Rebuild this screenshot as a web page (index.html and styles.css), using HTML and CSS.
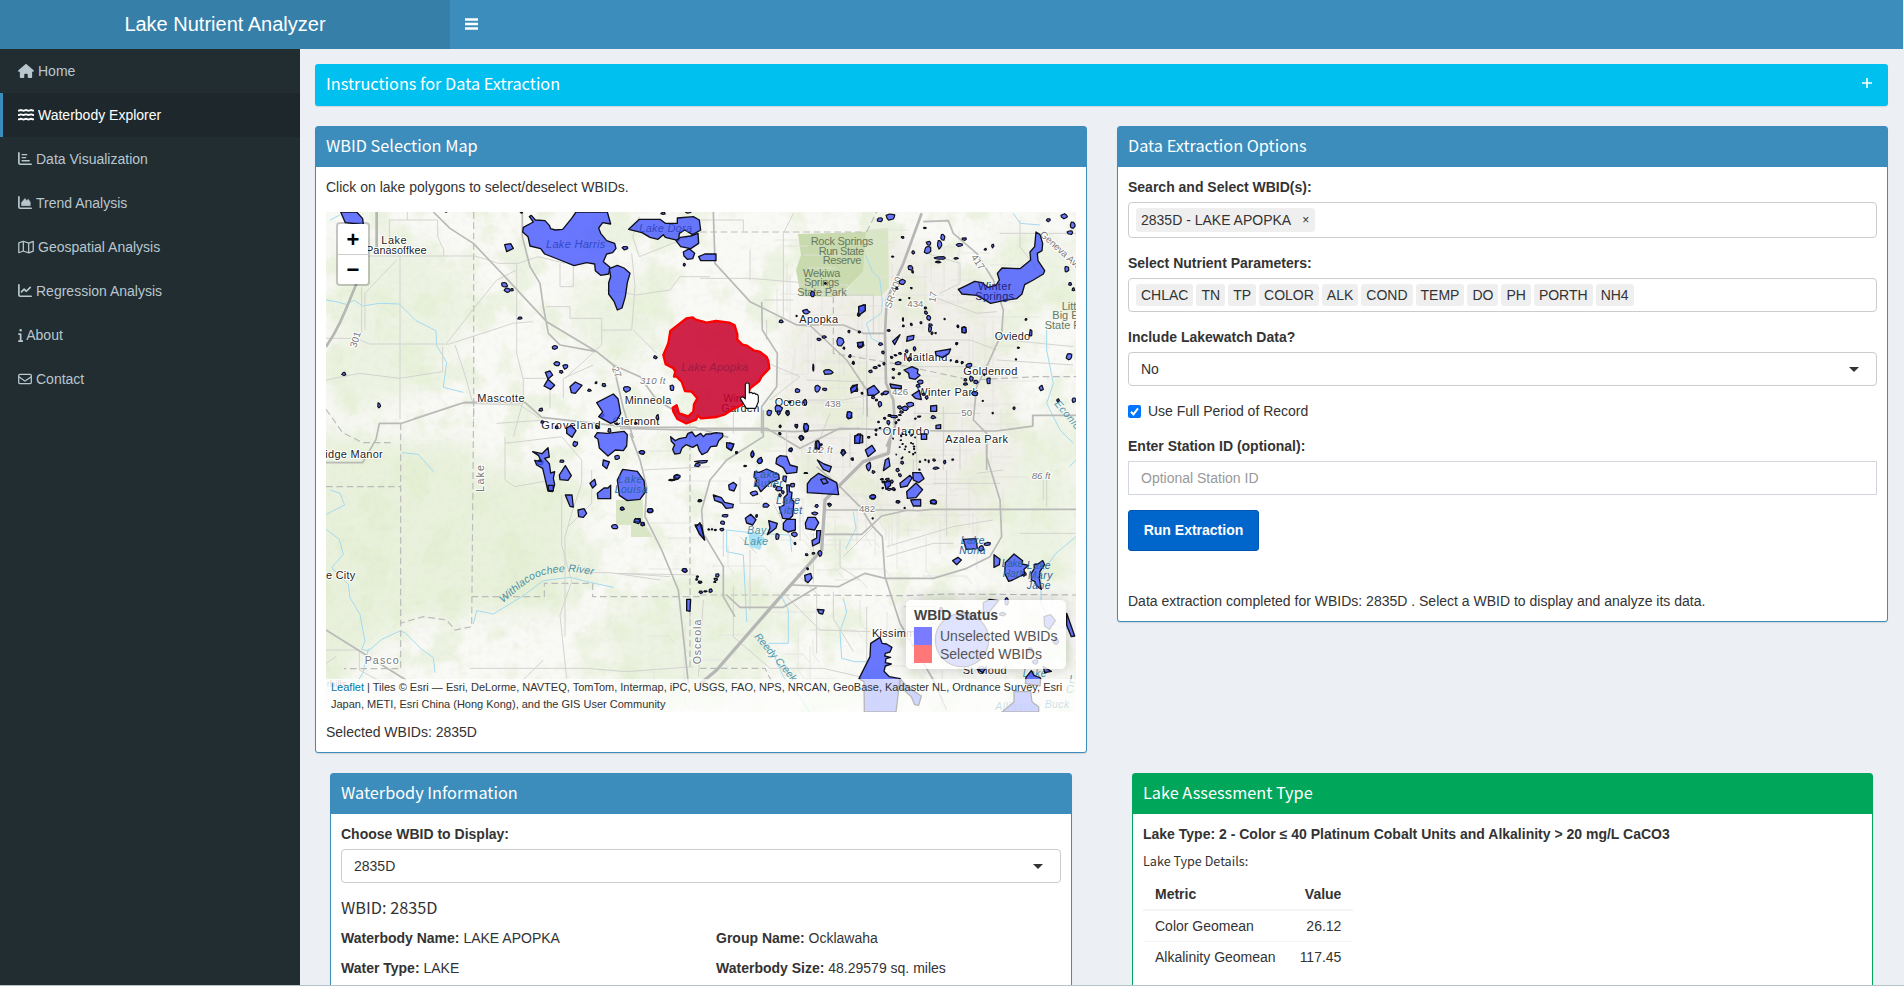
FILE: index.html
```html
<!DOCTYPE html>
<html lang="en">
<head>
<meta charset="utf-8">
<title>Lake Nutrient Analyzer</title>
<link rel="stylesheet" href="styles.css">
</head>
<body>
<div class="app">
  <header class="topbar">
    <div class="brand">Lake Nutrient Analyzer</div>
    <div class="navbar">
      <svg class="bars" viewBox="0 0 13 12"><path d="M0 1.5h13M0 6h13M0 10.5h13"/></svg>
    </div>
  </header>
  <div class="shell">
    <nav class="sidebar">
      <a class="nav-item"><svg class="ico w16" viewBox="0 0 576 512"><path d="M575.8 255.5c0 18-15 32.1-32 32.1h-32l.7 160.2c0 2.7-.2 5.4-.5 8.1V472c0 22.1-17.9 40-40 40H392c-22.1 0-40-17.9-40-40V384c0-17.7-14.3-32-32-32H256c-17.7 0-32 14.3-32 32v88c0 22.1-17.9 40-40 40H104c-22.1 0-40-17.9-40-40V287.6H32c-18 0-32-14-32-32.1c0-9 3-17 10-24L266.4 8c7-7 15-8 22-8s15 2 21 7L564.8 231.5c8 7 12 15 11 24z"/></svg>Home</a>
      <a class="nav-item active"><svg class="ico w16 line waves" viewBox="0 0 576 512"><path d="M24 95c40 0 50-22 78-22s52 26 93 26 60-26 93-26 52 26 93 26 60-26 93-26 40 22 78 22M24 255c40 0 50-22 78-22s52 26 93 26 60-26 93-26 52 26 93 26 60-26 93-26 40 22 78 22M24 415c40 0 50-22 78-22s52 26 93 26 60-26 93-26 52 26 93 26 60-26 93-26 40 22 78 22"/></svg>Waterbody Explorer</a>
      <a class="nav-item"><svg class="ico w14 line" viewBox="0 0 512 512"><path d="M32 32v368c0 26 22 48 48 48h400"/><path class="thin" d="M150 96h170M150 208h130M150 320h260"/></svg>Data Visualization</a>
      <a class="nav-item"><svg class="ico w14 line" viewBox="0 0 512 512"><path d="M32 32v368c0 26 22 48 48 48h400"/><path class="solid" d="M128 300v52h320V225l-70-105-60 50-62-80-128 145z"/></svg>Trend Analysis</a>
      <a class="nav-item"><svg class="ico w16 line" viewBox="0 0 576 512"><path class="thin" d="M24 135v330l160-62 208 66 160-62V50L392 112 184 46 24 108zM190 50v350M386 115v350"/></svg>Geospatial Analysis</a>
      <a class="nav-item"><svg class="ico w14 line" viewBox="0 0 512 512"><path d="M32 32v368c0 26 22 48 48 48h400M128 290l96-100 80 76 145-145"/></svg>Regression Analysis</a>
      <a class="nav-item about"><svg class="ico w5" viewBox="0 0 192 512"><path d="M48 80a48 48 0 1 1 96 0 48 48 0 1 1-96 0zM0 224c0-18 14-32 32-32h64c18 0 32 14 32 32v224h32c18 0 32 14 32 32s-14 32-32 32H32c-18 0-32-14-32-32s14-32 32-32h32V256H32c-18 0-32-14-32-32z"/></svg>About</a>
      <a class="nav-item"><svg class="ico w14 line" viewBox="0 0 512 512"><rect class="thin" x="26" y="88" width="460" height="336" rx="38"/><path class="thin" d="M26 170l200 145q30 20 60 0l200-145"/></svg>Contact</a>
    </nav>
    <main class="content">
      <section class="box info">
        <h3 class="box-title">Instructions for Data Extraction</h3>
        <svg class="plus" viewBox="0 0 10 10"><path d="M5 0v10M0 5h10"/></svg>
      </section>
      <div class="row">
        <section class="box primary">
          <h3 class="box-title">WBID Selection Map</h3>
          <div class="box-body">
            <p class="hint">Click on lake polygons to select/deselect WBIDs.</p>
            <div class="map">
              <svg class="canvas" viewBox="326 212 750 500" width="750" height="500">
                <defs>
                  <filter id="veg" x="0" y="0" width="1" height="1" color-interpolation-filters="sRGB">
                    <feTurbulence type="fractalNoise" baseFrequency=".028" numOctaves="5" seed="8"/>
                    <feColorMatrix values="0 0 0 0 .88  0 0 0 0 .93  0 0 0 0 .8  0 6 0 0 -2.9"/>
                  </filter>
                  <filter id="relief" x="0" y="0" width="1" height="1" color-interpolation-filters="sRGB">
                    <feTurbulence type="fractalNoise" baseFrequency=".16" numOctaves="4" seed="3"/>
                    <feColorMatrix values="0 0 0 0 .8  0 0 0 0 .8  0 0 0 0 .75  0 2 0 0 -.9"/>
                  </filter>
                  <filter id="soft" color-interpolation-filters="sRGB"><feGaussianBlur stdDeviation="10"/></filter>
                </defs>
                <rect x="326" y="212" width="750" height="500" fill="#f9f9f6"/>
                <g filter="url(#soft)">
                  <path fill="#e9f1dc" d="M400 440h70v20l110 20-10 130-160 10-90 70h-20V430z"/>
                  <path fill="#edf3e3" d="M336 240h90l60 60-60 90-90 30z"/>
                  <path fill="#edf3e3" d="M570 290l80-20 20 40-40 60-50-20z"/>
                  <path fill="#edf3e3" d="M990 460l86-60v190l-80-20zM1000 230l76 20v60l-76-10zM700 580l100 10-60 110h-120l-20-80z"/>
                  <path fill="#f1efe9" d="M790 320l100-90 110 60 20 160-40 90-150-20-60-90z"/>
                </g>
                <rect x="326" y="212" width="750" height="500" filter="url(#veg)" opacity=".45"/>
                <rect x="326" y="212" width="750" height="500" filter="url(#relief)" opacity=".13"/>
                <path class="park" d="M798 234l68-2 1 10-2 28-22 22-12 5-30-1-5-26 5-15z"/>
                <path class="park lite" d="M866 230l22-2 1 60-8 8h-40l22-24zM616 500h27v22l10 15h-22v-12h-15z"/>

                <g class="streets" id="streets"></g>

                <g transform="translate(310 120) scale(.33333)">
                  <path class="creek" d="M48 540l30 5 30 8 25-12 25 17 50-8 60 2 50 50 60 30 2 45 30 50-10 75 60 15M60 300l30-15"/>
                  <path class="county" d="M491 276V900"/>
                  <path class="road" d="M238 300v100M238 300h145v50l18 40v18M105 408h390l70 22h60l60-20 80 20M292 276v24M270 408v490M260 420L165 520v110M155 500v140M48 655h90l40 17h240l130-42 60-20 60-5M410 670l70-90 80-100 60-30M620 430v270l20 80v60l-30 110M435 675l30 90 25 90M48 780l100-20 120 15 130-20V680M750 430v70h40v-60M710 560h70v35h95v80l-110 100M1138 350l-150 60-20-60 20-60M965 400l10 100-10 130h-90M1200 470h-90l-30 40-100 15-90-15M310 895l140-45 180 5 60 40M850 735l-90 40v60M640 775h80v90M1040 700l-70-70"/>
                  <path class="road mid" d="M370 276l50 49 70 45 90 95 60 65 70 75 150 90 50 40 80 35 50 70 100 60M637 276v74l23 90 30 50 10 70 15 80 35 35 110 20M910 735l30 130 30 90"/>
                  <path class="road big" d="M200 276v120M140 490c-30 70-50 130-92 190"/>
                </g>
                <g transform="translate(700 200) scale(.33333)">
                  <path class="creek" d="M497 165l20 50 22 20 8 70-3 35-45 30 15 45 30 15M940 40l20 30 60 5M1040 390v60l20 100-20 60 40 80 40 40"/>
                  <path class="county" d="M0 96h497M400 290v170l180 30 230 50 200-10h118M500 96l30-60"/>
                  <path class="road" d="M0 235h150l180 15M0 60h130v35M150 150v90M280 40l-30 60v250M280 300h-90M405 290v-20M430 285h90v120M320 540l170 5v100M500 400v350M230 600h200l100-20M650 420h160l80 30M680 160l100 30v60l-60 30M600 500h230M640 640h200M650 700v110M730 620v190M700 290l130 50 60-5M900 100h230M960 60v80l60 80M920 420l200 20M890 480l230 15M1000 645v35l-140 15M780 720v90M200 420v-60M180 480l120 50-90 70M100 700V590M450 700v100M390 640l-40 100"/>
                  <path class="road mid" d="M40 36l5 154 105 115 140 70 42 3 108 102 60 90 2 80M290 375h140l60 25h67M670 65l75-3 15 38 70 60 50 80 30 90-5 70-45 100-30 60-10 100 40 40v110M185 305l2 85 45 70-2 100-45 60v80M0 685h200l100 60 120-60 300 8h170l108-15v-32h140"/>
                  <path class="road big" d="M665 40l-55 150-50 110-5 100 3 150 22 50 5 80-25 60"/>
                </g>
                <g transform="translate(310 400) scale(.33333)">
                  <path class="creek" d="M275 158l50 5 45 52M48 388l40 30 12 45-35 40 50 50 5 40 30 50 15 80-10 25 20 5 40-35 55-25 15 5 50 50 35 25 5 45M60 270l30 10 14 35-55 28M910 562l-70-15-60-15-80 10-60 45-90 55-50-10-10 40M175 745l-15 70-45 80"/>
                  <path class="county" d="M272 70v736h-170M48 260h224M491 0l-6 680-50 10-25-30-70-10-70 20M485 590h218v-40h145v40h330M1140 100v700M48 28l50 70 60 30 90 0"/>
                  <path class="road" d="M1050 540l-150-22h-80M48 750l100 0v60l100 55M480 805h350l120 10 200-15M910 520l250 5M585 110v130l30 20 110-20M585 130l170-20 60 70v70l-30 90-20 70v300M755 285v150l30 110-35 100 20 190M845 210v100l-70 70M1000 210l200-10M560 70l150-10M48 790l30-20M700 780l-60 60M1180 600l-15 230"/>
                  <path class="road mid" d="M48 188h110l40-70 10-48h67l190-63h180l50 45 270 30h190l100 30M960 100l30 80 20 80-5 90 50 100 50 120 30 280M48 690l240 150"/>
                </g>
                <g transform="translate(700 440) scale(.33333)">
                  <path class="creek" d="M80 270l90 10 100 5 5 50M80 270v65l50 10 10 200M460 215l8 50-30 60M430 475l10 40-20 60 5 80 40 10h40M220 640l30 70 50 60 30 50M1128 290l-60 50-45 60v90l30 60 60 20M1128 60l-20 20M265 510v100h-60M245 470l20 40"/>
                  <path class="water" d="M145 285l20-10 30 20-15 35-30-10z"/>
                  <path class="county" d="M0 465h240l380 2 120-5 388 3M0 685h195l30 60"/>
                  <path class="road" d="M300 200v100M290 400l60 60v180M420 300v80l60 40M560 320l200-60 120-20M640 60v150M740 90v200M830 100l80-10M700 130h200M1030 120v60M960 280h168M560 350l140-40h60M500 500v200l40 100M260 470l100 100 150 5M150 330v180M100 440v150l110 95h160l130 30M400 455v80l60 100M520 260l-90 90M340 280v150M610 500h100M700 550l100 100M1040 100v100M220 190l60 120"/>
                  <path class="road mid" d="M860 0v50l40 130 5 110-35 60-70 35-100 30H555l-60-15-80 40-140-5M375 210h220l60 2 40-4h433M350 80l70 60 60 60 37 58 30 32 8 120 45 140 100 170 40 90M375 283h110l60-55 80-18M80 465l40 37h130l100-60"/>
                  <path class="road huge" d="M570 0l-5 40-75 25-115 115-10 150-115 130L50 690l-50 42"/>
                </g>
                <g transform="translate(620 410) scale(.33333)">
                  <path class="road mid" d="M430 0v80l-110 70-50 60-25 90 5 70 60 100v90l35 60M0 55l200 5h220l100 5 200-10"/>
                  <path class="road" d="M310 350v90M0 490l150 10M180 0l30 30v20M210 550v80M360 200v80h60M360 380l50 50M500 60v100"/>
                </g>

                <!-- town and park captions -->
                <g transform="translate(310 120) scale(.33333)" class="lbl">
                  <text x="214" y="371" textLength="76">Lake</text><text x="168" y="401" textLength="182">Panasoffkee</text>
                  <text x="502" y="846" textLength="142">Mascotte</text><text x="944" y="851" textLength="140">Minneola</text>
                  <text class="gray it" x="990" y="791" textLength="76">310 ft</text>
                  <text class="gray" transform="translate(138 685) rotate(-72)">301</text>
                  <text class="gray" transform="translate(905 745) rotate(68)">27</text>
                </g>
                <g transform="translate(310 400) scale(.33333)" class="lbl">
                  <text x="694" y="88" textLength="178">Groveland</text><text x="908" y="75" textLength="140">Clermont</text>
                  <text x="46" y="173" textLength="172">idge Manor</text><text x="48" y="536" textLength="88">e City</text>
                  <text class="gray wide" x="164" y="791" textLength="102">Pasco</text><text class="gray" x="50" y="860">rhills</text>
                  <text class="gray wide" transform="translate(522 275) rotate(-90)" textLength="80">Lake</text>
                  <text class="gray wide" transform="translate(1174 793) rotate(-90)" textLength="134">Osceola</text>
                </g>
                <g transform="translate(700 200) scale(.33333)" class="lbl">
                  <text x="298" y="368" textLength="116">Apopka</text><text x="884" y="419" textLength="106">Oviedo</text>
                  <text x="610" y="482" textLength="132">Maitland</text><text x="790" y="524" textLength="162">Goldenrod</text>
                  <text x="652" y="587" textLength="182">Winter Park</text><text x="548" y="704" textLength="140">Orlando</text>
                  <text x="736" y="728" textLength="188">Azalea Park</text><text x="224" y="617" textLength="98">Ocoee</text>
                  <text x="70" y="606" textLength="92">Winter</text><text x="64" y="635" textLength="114">Garden</text>
                  <g class="green"><text x="332" y="136" textLength="188">Rock Springs</text><text x="356" y="165" textLength="136">Run State</text><text x="368" y="192" textLength="116">Reserve</text>
                  <text x="309" y="230" textLength="112">Wekiwa</text><text x="312" y="258" textLength="106">Springs</text><text x="292" y="288" textLength="148">State Park</text>
                  <text x="1085" y="330">Litt</text><text x="1057" y="358">Big E</text><text x="1034" y="388">State F</text></g>
                  <text class="gray" x="622" y="322">434</text><text class="gray" x="374" y="622">438</text><text class="gray" x="576" y="585">426</text><text class="gray" x="784" y="647">50</text>
                  <text class="gray it" x="320" y="760" textLength="78">182 ft</text>
                  <text class="gray" transform="translate(572 327) rotate(-70)">SR-400</text>
                  <text class="gray" transform="translate(705 308) rotate(-78)">17</text><text class="gray" transform="translate(812 172) rotate(55)">417</text>
                  <text class="gray" transform="translate(1018 106) rotate(42)">Geneva Ave</text>
                  <text class="wat" transform="translate(1062 612) rotate(50)">Econlo</text>
                </g>
                <g transform="translate(700 440) scale(.33333)" class="lbl">
                  <text x="516" y="591" textLength="168">Kissimmee</text><text x="788" y="701" textLength="132">St Cloud</text>
                  <text class="gray" x="477" y="217">482</text><text class="gray it" x="995" y="118">86 ft</text>
                  <g class="wat"><text x="142" y="283">Bay</text><text x="132" y="315">Lake</text>
                  <text x="968" y="712">Lake</text><text x="886" y="810">Alligator</text><text x="1034" y="803">Buck</text><text x="1108" y="730">L</text><text x="1098" y="760">C</text>
                  <text transform="translate(162 590) rotate(50)" textLength="180">Reedy Creek</text></g>
                </g>
                <path id="withla" fill="none" d="M503 603c15-12 25-25 45-29 14-3 28-3 45 1"/>
                <text class="river"><textPath href="#withla">Withlacoochee River</textPath></text>

                <!-- lakes drawn over the base map -->
                <g class="lake" id="small"></g>
                <g class="lake" transform="translate(310 120) scale(.33333)">
                  <path d="M92 276l14 32 54 6-2-18-18-20z"/>
                  <path d="M798 276H892L902 312 878 308 866 324 872 340 890 362 914 370 918 385 908 398 890 402 880 425 900 442 896 462 872 466 856 452 854 432 830 428 792 437 750 420 704 402 692 386 660 378 654 350 638 336 640 322 670 306 658 290 664 286 676 300 705 302 718 316 722 326 736 330 758 328 785 295z"/>
                  <path d="M898 446L922 436 942 444 960 460 952 488 946 530 936 564 922 570 912 544 896 522 896 488 902 470z"/>
                  <path d="M956 328L988 298 1050 298 1066 310 1102 310 1102 294 1150 290 1168 300 1172 330 1148 344 1124 330 1108 340 1106 362 1066 352 1060 344 1044 358 1020 352 996 338z"/>
                  <path d="M1098 362L1112 352 1142 348 1164 340 1166 370 1142 386 1112 380zM1120 396l18-10 16 14-6 16-16 2-10-10zM1166 410l18-8h34v20h-46z"/>
                  <path d="M860 848l50-26 14 14 8 44-12 22-18 8-36-20 12-14z"/>
                  <path d="M780 800l16-14 20 10-20 24-12-2zM706 757l14-4 8 12-14 12zM702 798l12-20 20 18-12 12zM584 374l18-3 8 14-20 10z"/>
                </g>
                <g class="lake" transform="translate(310 400) scale(.33333)">
                  <path d="M862 98l30 2 50-6 10 10-2 34-10 14-24-2-22 18-26-24-4-26-10-8z"/>
                  <path d="M938 208L982 214 1002 242 1006 276 990 298 952 302 928 286 922 240z"/>
                  <path d="M668 155l28 6 18-18 4 28-14 4 14 16 4 28 12-4-4 20 4 18-6 22-14-2-8-34-8-34-18-10-6-14 20 4-8-18z"/>
                  <path d="M748 225l18-28 18 30-10 14-24-2zM862 280l20-16h12l8-8v40h-38zM770 84l14-8 14 16-12 20-16-12zM840 250l14-12 4 16-10 10zM1155 375l20 0 8 44-26-40zM804 330l18-4 8 14-10 12-14-2z"/>
                  <path d="M880 180l18 6-8 20-12-10zM714 256h16v16h-14zM766 285l20 0 4 36-10-2z"/>
                </g>
                <g class="lake" transform="translate(620 410) scale(.33333)">
                  <path d="M152 80l14 12 12-6 20-4 6-12 12-4 10 14 16-10 8 10 8-8 14 0 16-4 20 2 0 10-12 12-6 16-18 2-10 16-16 8-8-12-6-18-14 8-20-8-12 10-6 16-16 2-6-14 6-14-10-10z"/>
                  <path d="M470 145l10-8 20 2 10 26 22 6-2 16-30 4-10-18-22-12z"/><path d="M404 185l14 2 22-10 36 16 2 14-26 10-30 28-8-16-8-2 4-18-8-8z"/>
                  <path d="M562 222l10-14 24-18 30 16 24 12 6 36-94-6zM602 208l14-2 8 12-14 4z"/>
                  <path d="M500 225l8 0 0 20 8 2-2 20 8 8-4 42-10 10-20-2-10-32 14-8 0-22 10-10z"/>
                  <path d="M490 340l10-12 26 0v32l-22 6-14-8zM556 340l8-18 22 0 10 16-12 22-26-4zM590 362l12 0-4 36-20 10-2-16 14-8z"/>
                  <path d="M326 225l14-8 10 8-8 18-14-4zM280 255l24 8 10 14 26 6-2 10-20 2-12-16-22-8zM376 325l16-12 16 16-10 16-18-6zM446 332l26 8-4 14-26 20 8-20zM228 350l12-12 14 52-16-18zM320 98l22 4-8 20-14-10zM592 150l20 12 22 8-6 16-18-8zM704 84l10-12 14 4v22l-18 2zM554 496l18-6 4 14-12 14-8-6zM200 568h12l-2 36-10-2zM592 598l20 2-4 12-10-2z"/>
                </g>
                <g class="lake" transform="translate(700 200) scale(.33333)">
                  <path d="M1008 96L1020 104 1028 130 1026 152 1012 160 1014 182 1034 212 1030 222 1000 240 974 254 966 282 950 296 910 302 872 310 848 296 830 286 786 282 775 268 800 256 824 244 846 248 864 262 888 256 898 240 892 220 906 204 960 206 992 180 990 156 1004 140z"/>
                </g>
                <g class="lake" transform="translate(850 300) scale(.33333)">
                  <path d="M162 210l24-10 18 8-2 12 8 6-14 12-18-4-2-14zM256 155l46-8-6 14-18 12-20-8zM186 285l22-14 6 28-18-4zM172 110l20-4-2 12-20 6zM26 20l20-6v18l-20 14zM128 124l22-20-16 30zM120 252l34 6 0 8-30-2zM52 268l20-12 16 20-14 10-20 0zM2 265l20-12-2 16-16 10zM22 128l18-2-4 14-12-2zM242 318l18-2v18l-18 0zM258 376l14-2v12l-14 0zM214 402h16v16h-16zM14 408l18-6-4 28-14 0zM46 450l20-14 10 16-22 18zM106 480l10-6 4 24-20 14zM150 550l30-24 6 8-14 24-20 4zM188 518l24 0 10 18-16 12-16-8zM170 575l28-26 20 20-20 24-26 2zM182 600l30-2 0 20-22 0zM104 548l16-6 2 14-14 12zM336 82h12v16h-12z"/>
                </g>
                <g class="lake" transform="translate(700 440) scale(.33333)">
                  <path d="M540 592L512 610 510 650 477 716 492 725 493 816H588L600 716 568 710 552 694 556 678 574 672 556 668 558 656 572 652 554 648 556 640 570 636 576 622 560 612 546 610z"/>
                  <path d="M600 716l18 20 24 18 22 14-8 28-12-2-10-24-22-20-12-6z"/>
                  <circle cx="786" cy="600" r="80"/>
                  <path d="M790 298l38-2 4 30-34 2zM882 344l18 14-2 16-16 8zM916 368l26-26 26 20-2 10 20 4-14 12 2 14-36 18-12 4-12-24zM1002 374l12-2 14-10 6 12-14 20-2 22 6 32-14-10-6-14-10-4 0-20 10-16zM850 488l20-10 26 4-30 36-16-4zM1032 530l20-6 14 18-18 26-14-10zM1100 520l24 68-10 2-14-34zM978 712l16-20 8 14 20 8-2 24-44-8zM942 755l50 0 4 30 20 16v15h-110l36-30zM832 688l26-4-10 14zM1030 680l24 14-20 4zM758 362l16-10 10 8-14 14z"/>
                </g>
                <g transform="translate(610 205) scale(.33333)">
                  <path class="picked" d="M229 340L248 337 257 344 290 353 318 348 358 353 374 361 382 388 382 404 397 419 411 422 433 437 449 440 470 456 475 468 478 490 455 514 447 529 420 550 405 592 395 600 370 612 345 628 320 636 273 640 264 632 258 644 229 655 202 642 190 620 188 608 200 601 207 625 235 634 250 620 252 598 262 580 245 560 225 558 215 530 200 515 192 515 196 500 190 490 167 478 160 450 175 415 181 378z"/>
                  <text class="lake-name" x="214" y="497" textLength="200">Lake Apopka</text>
                  <g class="lake-name blue"><text x="88" y="80" textLength="158">Lake Dora</text></g>
                  <path class="hand" d="M406 540q0-6 6-6t6 6v24q6-4 10 2 6-4 9 2 6-2 8 6v16l-8 20h-28l-16-26q-4-8 4-8 4 0 9 6z"/>
                </g>
                <g class="lake-name blue" transform="translate(310 120) scale(.33333)"><text x="708" y="384" textLength="178">Lake Harris</text></g>
                <g class="lake-name navy" transform="translate(700 200) scale(.33333)"><text x="834" y="269" textLength="100">Winter</text><text x="826" y="299" textLength="116">Springs</text></g>
                <g class="lake-name teal" transform="translate(310 400) scale(.33333)"><text x="924" y="250" textLength="74">Lake</text><text x="914" y="280" textLength="100">Louisa</text></g>
                <g class="lake-name teal" transform="translate(700 440) scale(.33333)">
                  <text x="162" y="115">Lake</text><text x="160" y="140">Butler</text><text x="228" y="193">Lake</text><text x="232" y="222">Tibet</text>
                  <text x="782" y="312">Lake</text><text x="778" y="343">Nona</text><text x="905" y="382" textLength="66">Lake</text><text x="908" y="411" textLength="60">Hart</text>
                  <text x="980" y="386">Lake</text><text x="984" y="416">Mary</text><text x="980" y="446">Jane</text>
                </g>
              </svg>
              <div class="zoom"><span>+</span><span>−</span></div>
              <div class="legend">
                <strong>WBID Status</strong>
                <div><i class="un"></i>Unselected WBIDs</div>
                <div><i class="sel"></i>Selected WBIDs</div>
              </div>
              <div class="credit"><a>Leaflet</a> | Tiles © Esri — Esri, DeLorme, NAVTEQ, TomTom, Intermap, iPC, USGS, FAO, NPS, NRCAN, GeoBase, Kadaster NL, Ordnance Survey, Esri<br>Japan, METI, Esri China (Hong Kong), and the GIS User Community</div>
            </div>
            <p class="selected">Selected WBIDs: 2835D</p>
          </div>
        </section>
        <section class="box primary">
          <h3 class="box-title">Data Extraction Options</h3>
          <div class="box-body">
            <div class="field"><label>Search and Select WBID(s):</label>
              <div class="control chips tall"><span>2835D - LAKE APOPKA<b>×</b></span></div></div>
            <div class="field"><label>Select Nutrient Parameters:</label>
              <div class="control chips"><span>CHLAC</span><span>TN</span><span>TP</span><span>COLOR</span><span>ALK</span><span>COND</span><span>TEMP</span><span>DO</span><span>PH</span><span>PORTH</span><span>NH4</span></div></div>
            <div class="field"><label>Include Lakewatch Data?</label>
              <div class="control select">No</div></div>
            <div class="check"><svg viewBox="0 0 13 13"><rect width="13" height="13" rx="2"/><path d="M3 6.8l2.4 2.6L10 3.4"/></svg>Use Full Period of Record</div>
            <div class="field"><label>Enter Station ID (optional):</label>
              <div class="control plain">Optional Station ID</div></div>
            <button class="run">Run Extraction</button>
            <p class="status">Data extraction completed for WBIDs: 2835D . Select a WBID to display and analyze its data.</p>
          </div>
        </section>
      </div>
      <div class="row inner">
        <section class="box primary">
          <h3 class="box-title">Waterbody Information</h3>
          <div class="box-body">
            <div class="field"><label>Choose WBID to Display:</label>
              <div class="control select">2835D</div></div>
            <h4 class="wbid">WBID: 2835D</h4>
            <div class="facts">
              <p><b>Waterbody Name:</b> LAKE APOPKA</p><p><b>Group Name:</b> Ocklawaha</p>
              <p><b>Water Type:</b> LAKE</p><p><b>Waterbody Size:</b> 48.29579 sq. miles</p>
            </div>
          </div>
        </section>
        <section class="box success">
          <h3 class="box-title">Lake Assessment Type</h3>
          <div class="box-body">
            <p class="type">Lake Type: 2 - Color ≤ 40 Platinum Cobalt Units and Alkalinity &gt; 20 mg/L CaCO3</p>
            <h5 class="details">Lake Type Details:</h5>
            <table>
              <thead><tr><th>Metric</th><th>Value</th></tr></thead>
              <tbody><tr><td>Color Geomean</td><td>26.12</td></tr><tr><td>Alkalinity Geomean</td><td>117.45</td></tr></tbody>
            </table>
          </div>
        </section>
      </div>
    </main>
  </div>
</div>
<script src="map.js"></script>
</body>
</html>
```

FILE: styles.css
```css
* { box-sizing: border-box; }
body { margin: 0; font: 14px/20px "Liberation Sans", Arial, sans-serif; color: #333; background: #ecf0f5; }
p, h3, h4, h5 { margin: 0; }
.app { height: 986px; overflow: hidden; display: flex; flex-direction: column; border-bottom: 1px solid #b4c3c5; }
.topbar { display: flex; height: 49px; flex: none; color: #fff; background: #3c8dbc; margin-right: 1px; }
.brand { width: 450px; background: #367fa9; text-align: center; font-size: 20px; line-height: 48px; }
.navbar { padding: 18px 15px; }
.bars { width: 13px; height: 12px; display: block; fill: none; stroke: #fff; stroke-width: 2.4; }
.shell { display: flex; flex: 1; min-height: 0; }
.sidebar { width: 300px; flex: none; background: #222d32; }
.nav-item { display: flex; align-items: center; height: 44px; padding-left: 15px; border-left: 3px solid transparent; color: #b8c7ce; gap: 4px; }
.nav-item.active { color: #fff; background: #1e282c; border-left-color: #3c8dbc; }
.nav-item.about { gap: 3px; }
.ico { height: 14px; fill: currentColor; }
.w16 { width: 16px; } .w14 { width: 14px; } .w5 { width: 5.25px; }
.ico.line { fill: none; stroke: currentColor; stroke-width: 62; stroke-linecap: round; stroke-linejoin: round; }
.ico.line.waves { stroke-width: 72; }
.ico .thin { stroke-width: 46; }
.ico .solid { fill: currentColor; stroke-width: 20; }

.content { flex: 1; padding: 15px 16px 15px 15px; min-width: 0; }
.box { background: #fff; border-radius: 3px; box-shadow: 0 1px 1px rgba(0,0,0,.12); }
.box-title { font: 400 16.3px/20px "Noto Sans CJK SC", "Noto Sans", sans-serif; color: #fff; height: 41px; padding: 9px 11px; }
.info { display: flex; justify-content: space-between; height: 42px; background: #00c0ef; margin-bottom: 20px; }
.plus { width: 10px; height: 10px; margin: 14px 16px; stroke: #fff; stroke-width: 1.6; }
.row { display: grid; grid-template-columns: 772px 1fr; gap: 30px; align-items: start; margin-bottom: 20px; }
.row.inner { padding: 0 15px; gap: 60px; grid-template-columns: 742px 1fr; }
.primary { border: 1px solid #3c8dbc; }
.success { border: 1px solid #00a65a; }
.primary .box-title { background: #3c8dbc; }
.success .box-title { background: #00a65a; }
.primary .box-title, .success .box-title { height: 40px; padding: 8px 10px; }
.box-body { padding: 10px; }
.hint { margin-bottom: 15px; }
.selected { padding-top: 10px; }

.map { position: relative; height: 500px; overflow: hidden; }
.canvas { display: block; }
.zoom { position: absolute; left: 10px; top: 10px; width: 34px; border: 2px solid rgba(0,0,0,.2); border-radius: 4px; background: #fff; background-clip: padding-box; }
.zoom span { display: block; height: 30px; text-align: center; font: bold 22px/31px "Liberation Sans", sans-serif; color: #000; }
.zoom span + span { border-top: 1px solid #ccc; line-height: 29px; }
.legend { position: absolute; left: 580px; top: 388px; width: 160px; height: 69px; padding: 6px 8px; background: rgba(255,255,255,.8); box-shadow: 0 0 15px rgba(0,0,0,.2); border-radius: 5px; color: #555; font-size: 14px; line-height: 18px; }
.legend strong { display: block; height: 21px; color: #444; }
.legend div { display: flex; gap: 8px; height: 18px; white-space: nowrap; }
.legend i { width: 18px; height: 18px; flex: none; }
.un { background: #7b7bff; } .sel { background: #ff7777; }
.credit { position: absolute; left: 0; bottom: 0; width: 750px; height: 33px; padding: 0 5px; background: rgba(255,255,255,.7); font-size: 11px; line-height: 17px; white-space: nowrap; }
.credit a { color: #0078a8; }

.streets path { fill: none; stroke: #e2e2de; stroke-width: .8; }
.road { fill: none; stroke: #d3d3d0; stroke-width: 3; stroke-linejoin: round; }
.road.mid { stroke: #b9b9b7; stroke-width: 5; }
.road.big { stroke: #b6b6b4; stroke-width: 8; }
.road.huge { stroke: #b6b6b4; stroke-width: 10; }
.creek { fill: none; stroke: #a3daf0; stroke-width: 3; stroke-linejoin: round; }
.water { fill: #a9e1f5; }
.county { fill: none; stroke: #bbb; stroke-width: 3.5; stroke-dasharray: 20 11; }
.park { fill: #c9dbae; } .park.lite { fill: #d9e6c6; }
.lbl text { font: 33px "Liberation Sans", sans-serif; fill: #222; stroke: #fff; stroke-width: 6px; stroke-linejoin: round; paint-order: stroke; }
.lbl text.gray { fill: #777; font-size: 29px; }
.lbl text.wide { font-size: 32px; }
.lbl text.it { font-style: italic; }
.lbl .green text { fill: #66785d; stroke: none; }
.lbl .wat text, .lbl text.wat { fill: #4d96ae; stroke: none; font-style: italic; font-size: 31px; letter-spacing: 1.5px; }
.river { font: italic 10.5px "Liberation Sans", sans-serif; fill: #4d90a6; letter-spacing: .2px; }
.lake path, .lake circle { fill: #4456ff; fill-opacity: .8; stroke: #10101c; stroke-width: 4; stroke-linejoin: round; }
#small path { stroke-width: 1.2; }
.picked { fill: #c8002c; fill-opacity: .86; stroke: #f00; stroke-width: 7; stroke-linejoin: round; }
.lake-name, .lake-name text { font: italic 33px "Liberation Sans", sans-serif; fill: #9b1c45; }
.blue text { fill: #3448c8; }
.navy text { font-style: normal; fill: #23237a; }
.teal text { fill: #2a639c; font-size: 31px; letter-spacing: 1.5px; }
.hand { fill: #fff; stroke: #111; stroke-width: 3.5; stroke-linejoin: round; }

.field { margin-bottom: 15px; }
.field label { display: block; font-weight: bold; margin-bottom: 5px; }
.control { height: 34px; border: 1px solid #ccc; border-radius: 4px; padding: 6px 12px; background: #fff; position: relative; }
.chips { display: flex; gap: 3px; padding: 5px 7px; }
.chips span { background: #efefef; border-radius: 3px; padding: 0 5px; line-height: 22px; height: 22px; }
.tall { height: 36px; }
.tall span { height: 24px; line-height: 24px; padding-right: 0; display: flex; }
.tall b { font-weight: normal; font-size: 12px; width: 19px; text-align: center; margin-left: 5px; }
.select::after { content: ""; position: absolute; right: 17px; top: 14px; border: 5px solid transparent; border-top-color: #333; border-bottom: 0; }
.plain { border-color: #d2d6de; border-radius: 0; color: #999; }
.check { display: flex; align-items: center; gap: 7px; height: 20px; margin-bottom: 15px; }
.check svg { width: 13px; height: 13px; fill: #0075ff; }
.check path { fill: none; stroke: #fff; stroke-width: 2; }
.run { display: block; width: 131px; height: 41px; border: 1px solid #0056b3; border-radius: 3px; background: #0066cc; color: #fff; font: bold 14px "Liberation Sans", sans-serif; padding: 0 0 1px; margin-bottom: 40px; }
.status { white-space: nowrap; }
.wbid { font: 400 16.3px/20px "Noto Sans CJK SC", "Noto Sans", sans-serif; margin: -1px 0 11px; }
.facts { display: grid; grid-template-columns: 1fr 1fr; column-gap: 30px; row-gap: 10px; height: 70px; align-content: start; }
.type { font-weight: bold; margin-bottom: 9px; }
.details { font: 400 12.6px/16px "Noto Sans CJK SC", "Noto Sans", sans-serif; margin-bottom: 10px; }
table { border-collapse: collapse; margin-bottom: 30px; width: 210px; }
th, td { text-align: left; padding: 5px 12px; height: 31px; white-space: nowrap; }
th:last-child, td:last-child { text-align: right; }
th { border-bottom: 2px solid #f4f4f4; }
td { border-bottom: 1px solid #f4f4f4; }
tr:last-child td { border: 0; }
```

FILE: map.js
```js
// Small water bodies: groups of [originX, originY, "x,y,w,h ..."] at three units per map pixel.
const ponds = [
  [310, 120, "408,275,6,5 945,384,16,10 1123,434,8,8 1060,280,14,8 1134,276,18,6 634,277,6,5 582,494,20,14 592,510,18,12 606,509,8,10 630,594,14,8 735,682,16,12 741,731,18,14 766,740,14,14 754,755,10,10 102,762,12,12 207,856,8,16 838,811,10,8 858,788,6,6 882,795,10,12 951,808,20,16 1036,712,10,10 1086,804,14,16 693,869,12,10 878,886,10,10 1042,892,8,16"],
  [310, 400, "697,66,8,8 740,82,10,8 796,132,14,16 756,183,14,8 690,188,18,16 862,82,10,12 899,92,10,14 920,72,8,6 978,70,8,6 995,157,16,12 921,172,14,14 936,326,12,12 1020,332,16,16 982,362,20,16 998,373,12,10 914,380,20,14 1100,231,20,14 1085,240,16,4 1169,302,10,8 1124,511,14,12 1170,546,12,6"],
  [700, 200, "572,50,26,20 540,60,18,12 1046,60,12,10 1093,48,18,14 1118,76,14,20 1110,98,16,12 1100,208,12,20 1110,252,10,10 1120,268,8,10 608,112,8,6 675,84,10,4 728,112,14,18 718,134,14,24 684,150,22,24 686,130,14,12 793,117,14,8 778,135,18,8 878,138,8,10 856,148,8,6 640,157,8,10 578,170,6,4 720,174,32,8 714,186,16,6 768,175,12,6 632,204,16,14 638,216,6,8 606,246,18,16 634,264,6,4 600,300,6,4 628,294,4,4 590,265,8,6 337,282,12,20 318,336,20,14 290,348,4,4 376,250,6,6 243,364,12,10 486,325,20,20 476,344,10,10 356,418,12,8 372,411,14,8 420,425,24,30 447,394,6,8 478,396,6,6 482,436,18,16 432,444,6,6 450,468,8,8 460,490,8,8 340,504,4,22 382,516,30,14 292,572,16,12 352,566,16,20 374,568,14,8 463,566,22,20 235,628,22,22 263,638,10,16 316,606,10,18 270,606,8,6 448,646,16,24 288,678,8,10 318,683,14,28 304,714,14,14 240,680,6,6 240,702,6,4 92,738,18,22 272,749,12,12 352,735,16,30 430,756,14,16 110,757,6,6 158,763,10,18 180,784,16,12 978,358,6,6 992,400,8,22 955,443,6,4 948,478,4,4 1108,470,18,20 1024,565,12,16 1074,601,10,10 1122,600,14,14 942,625,8,8 878,639,4,4 848,603,4,4 866,542,10,20 853,524,6,6 808,496,18,12 786,488,6,6 770,484,6,6 770,430,6,6 774,380,6,6 792,390,14,18 734,357,4,4"],
  [850, 300, "116,91,10,6 159,58,4,10 160,78,6,6 184,73,6,8 213,68,6,6 226,24,8,6 228,38,10,10 236,53,14,16 242,75,14,8 240,87,10,18 246,100,6,8 257,99,4,4 92,132,14,10 99,157,8,10 10,187,6,8 62,214,10,8 75,203,12,8 88,197,8,4 102,191,8,8 125,172,8,6 136,166,8,4 150,160,8,6 144,190,16,10 130,208,8,6 148,221,8,6 193,146,8,14 178,178,12,12 170,154,8,10 130,233,8,6 210,246,16,14 204,258,12,10 230,292,10,10 220,282,8,8 108,278,14,14 96,282,8,6 90,312,10,16 70,292,12,8 80,300,8,6 68,285,6,4 36,280,6,6 180,314,22,14 164,325,20,12 154,336,12,8 148,322,12,10 132,350,20,8 118,346,10,6 115,367,10,14 104,355,8,6 86,366,6,4 90,384,6,4 78,390,8,6 56,412,8,6 78,404,4,6 150,345,8,4 146,360,8,4 138,368,6,6 250,352,14,10 208,350,10,4 196,356,6,4 302,181,4,4 320,185,8,6 337,187,6,4 346,240,10,8 346,252,12,8 364,236,12,16 378,246,14,10 374,281,18,16 323,78,4,6 320,131,6,6 56,499,14,24 70,516,10,8 6,476,6,6 156,488,10,8 142,510,10,12 150,526,10,10 100,546,10,6 112,538,12,8 126,544,8,10 118,568,16,8 132,568,8,8 68,590,16,14 144,604,10,6 250,606,20,14 258,504,16,8 284,486,8,10 308,479,6,4 252,480,8,6 210,485,4,4 226,480,4,4 208,509,4,4 236,484,4,8"],
  [620, 410, "66,126,16,12 90,302,18,14 52,332,18,12 68,342,12,10 8,296,12,10 240,272,10,6 246,155,38,8 232,165,16,10 172,200,18,10 156,210,20,4 349,128,6,8 376,168,10,4 397,132,10,18 420,152,16,20 438,286,18,12 402,250,22,14 316,317,18,8 308,338,14,12 306,358,12,8 286,360,6,4 266,358,6,4 276,358,4,4 410,318,6,8 472,380,12,18 524,372,18,14 525,400,6,8 512,119,12,12 558,189,10,4 590,288,12,10 584,310,18,10 630,284,10,10 626,282,8,4 600,430,12,16 560,434,8,8 580,430,8,6 563,476,6,6 494,206,12,20 518,226,14,12 476,236,20,12 464,228,10,8 488,246,8,10 480,256,8,10 194,481,14,12 232,500,6,6 230,508,6,6 240,517,12,6 292,496,10,12 288,508,12,8 284,516,6,4 242,546,10,8 256,544,10,4 272,542,10,12 594,104,10,28 604,104,6,6 544,84,12,14 558,52,16,24 530,48,8,12 480,48,6,6 479,70,6,6 448,8,14,16 476,8,10,12 504,10,8,14 688,14,16,20 670,128,10,16 698,148,4,8"],
  [700, 440, "700,185,18,12 594,186,10,8 614,204,4,4 518,235,4,4 546,118,10,6 560,132,14,20 580,146,10,8 548,144,6,4 518,170,16,14 844,326,14,16 862,312,18,10 972,402,14,12 908,522,20,10 920,484,10,22 724,508,10,12 1006,665,14,14 1068,604,18,20 990,630,16,14"]
];
const NS = "http://www.w3.org/2000/svg";
let seed = 11;
const rnd = () => (seed = (seed * 16807) % 2147483647) / 2147483647;
const small = document.getElementById("small");
function blob(x, y, w, h) {
  const n = w + h > 8 ? 8 : 5;
  let d = "";
  for (let i = 0; i < n; i++) {
    const a = (i / n) * Math.PI * 2 + rnd() * 0.5;
    const r = 0.75 + rnd() * 0.45;
    d += (i ? "L" : "M") + (x + Math.cos(a) * w * r / 2).toFixed(1) + " " + (y + Math.sin(a) * h * r / 2).toFixed(1);
  }
  const p = document.createElementNS(NS, "path");
  p.setAttribute("d", d + "z");
  small.appendChild(p);
}
for (const [ox, oy, list] of ponds)
  for (const item of list.split(" ")) {
    const [x, y, w, h] = item.split(",").map(Number);
    blob(ox + x / 3, oy + y / 3, w / 3, h / 3);
  }
// Scattered ponds across downtown
for (let i = 0; i < 24; i++) blob(892 + rnd() * 24, 430 + rnd() * 30, .6 + rnd() * .8, .6 + rnd() * .8);

// Minor street grid of the urban area
const streets = document.getElementById("streets");
let d = "";
for (let i = 0; i < 150; i++) {
  const x = 775 + rnd() * 230, y = 225 + rnd() * 310, l = 12 + rnd() * 45;
  d += "M" + x.toFixed(0) + " " + y.toFixed(0) + (rnd() > .5 ? "h" : "v") + l.toFixed(0);
}
for (let i = 0; i < 50; i++) {
  const x = 640 + rnd() * 330, y = 440 + rnd() * 240, l = 15 + rnd() * 40;
  d += "M" + x.toFixed(0) + " " + y.toFixed(0) + (rnd() > .5 ? "h" : "v") + l.toFixed(0) + "l6 8";
}
const p = document.createElementNS(NS, "path");
p.setAttribute("d", d);
streets.appendChild(p);
```
